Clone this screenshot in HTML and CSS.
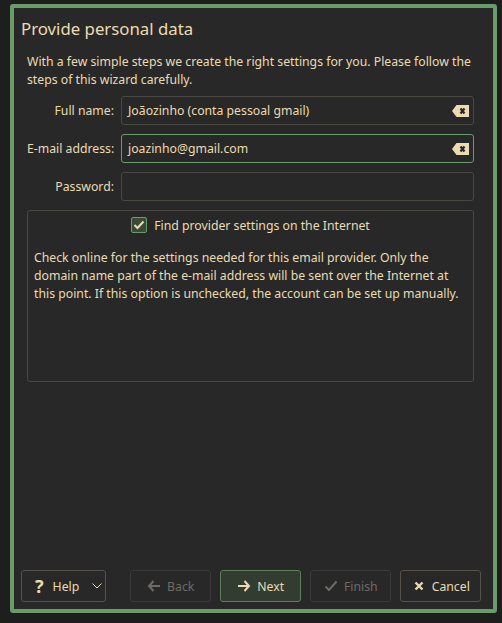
FILE: index.html
```html
<!DOCTYPE html>
<html>
<head>
<meta charset="utf-8">
<link rel="stylesheet" href="styles.css">
</head>
<body>
<div class="window">
  <h1 class="title">Provide personal data</h1>
  <div class="content">
    <p class="intro">With a few simple steps we create the right settings for you. Please follow the steps of this wizard carefully.</p>
    <div class="form">
      <label class="label">Full name:</label>
      <div class="input"><span class="value">Joãozinho (conta pessoal gmail)</span>
        <svg class="clear" width="17" height="12" viewBox="0 0 17 12"><path d="M4.5 0H17V12H4.5L0 6Z" fill="#ebdbb2"/><path d="M8.5 3.5L12.5 8.5M12.5 3.5L8.5 8.5" stroke="#282828" stroke-width="2.2"/></svg>
      </div>
      <label class="label">E-mail address:</label>
      <div class="input focus"><span class="value">joazinho@gmail.com</span>
        <svg class="clear" width="17" height="12" viewBox="0 0 17 12"><path d="M4.5 0H17V12H4.5L0 6Z" fill="#ebdbb2"/><path d="M8.5 3.5L12.5 8.5M12.5 3.5L8.5 8.5" stroke="#282828" stroke-width="2.2"/></svg>
      </div>
      <label class="label">Password:</label>
      <div class="input"></div>
    </div>
    <div class="group">
      <div class="check-row">
        <span class="checkbox"><svg width="12" height="10" viewBox="0 0 12 10"><path d="M1.5 5L4.5 8L10.5 1.5" fill="none" stroke="#ebdbb2" stroke-width="2"/></svg></span>
        <span>Find provider settings on the Internet</span>
      </div>
      <p class="note">Check online for the settings needed for this email provider. Only the domain name part of the e-mail address will be sent over the Internet at this point. If this option is unchecked, the account can be set up manually.</p>
    </div>
  </div>
  <div class="spacer"></div>
  <div class="buttons">
    <button class="btn help"><span class="q">?</span><span>Help</span><svg class="chev" width="10" height="6" viewBox="0 0 10 6"><path d="M0.5 0.5L5 5L9.5 0.5" fill="none" stroke="#ebdbb2" stroke-width="1"/></svg></button>
    <div class="gap"></div>
    <button class="btn disabled"><svg width="16" height="16" viewBox="0 0 16 16"><path d="M14 8H3M7.5 3L3 8L7.5 13" fill="none" stroke="#6e6b66" stroke-width="2"/></svg><span>Back</span></button>
    <button class="btn primary"><svg width="16" height="16" viewBox="0 0 16 16"><path d="M2 8H13M8.5 3L13 8L8.5 13" fill="none" stroke="#ebdbb2" stroke-width="2"/></svg><span>Next</span></button>
    <button class="btn disabled"><svg width="16" height="16" viewBox="0 0 16 16"><path d="M2.5 8.5L6 12L13.5 3.5" fill="none" stroke="#6e6b66" stroke-width="2"/></svg><span>Finish</span></button>
    <button class="btn cancel"><svg width="16" height="16" viewBox="0 0 16 16"><path d="M4.5 4.5L11.5 11.5M11.5 4.5L4.5 11.5" stroke="#ebdbb2" stroke-width="2.4"/></svg><span>Cancel</span></button>
  </div>
</div>
</body>
</html>
```
FILE: styles.css
```css
* { box-sizing: border-box; }
html, body { margin: 0; padding: 0; }
body {
  background: #1e1e1e;
  font-family: "Noto Sans", "Open Sans", sans-serif;
  font-size: 12.25px;
  color: #ebdbb2;
  width: 502px;
  height: 623px;
  overflow: hidden;
}
.window {
  margin: 4px 0 0 10px;
  width: 487px;
  height: 609px;
  background: #282828;
  border: 4px solid #689d6a;
  border-radius: 3px;
  display: flex;
  flex-direction: column;
  padding: 8px 12px 7px 7px;
}
.title {
  margin: 0;
  font-size: 16.8px;
  font-weight: normal;
  line-height: 26px;
}
.content {
  margin: 0 7px 0 6px;
}
.intro {
  margin: 11px 0 0 0;
  line-height: 18px;
}
.form {
  margin-top: 7px;
  display: grid;
  grid-template-columns: 87px 1fr;
  column-gap: 7px;
  row-gap: 9px;
  align-items: center;
}
.label {
  text-align: right;
  white-space: nowrap;
}
.input {
  height: 29px;
  border: 1px solid #4b4741;
  border-radius: 3px;
  display: flex;
  align-items: center;
  padding: 0 4px 0 6px;
}
.input.focus { border-color: #689d6a; }
.value { flex: 1; }
.clear { display: block; }
.group {
  margin-top: 9px;
  height: 172px;
  border: 1px solid #4b4741;
  border-radius: 3px;
  padding: 5px 6px 0 6px;
}
.check-row {
  display: flex;
  align-items: center;
  justify-content: center;
  gap: 7px;
  height: 18px;
}
.checkbox {
  width: 16px;
  height: 16px;
  border: 1px solid #689d6a;
  background: #3a4a37;
  border-radius: 2px;
  display: flex;
  align-items: center;
  justify-content: center;
}
.note {
  margin: 15px 0 0 0;
  line-height: 18px;
}
.spacer { flex: 1; }
.buttons {
  display: flex;
  gap: 8.5px;
  height: 32px;
}
.gap { flex: 1; }
.btn {
  width: 81.5px;
  height: 32px;
  background: #282828;
  border: 1px solid #57524b;
  border-radius: 3px;
  color: #ebdbb2;
  font-family: inherit;
  font-size: 12.25px;
  display: flex;
  align-items: center;
  justify-content: center;
  gap: 5px;
  padding: 0;
}
.btn svg { display: block; }
.btn.help { width: 85px; justify-content: flex-start; padding-left: 13px; gap: 9px; }
.btn.help .q { font-size: 18px; font-weight: bold; line-height: 1; }
.btn.help .chev { margin-left: 4px; }
.btn.primary { background: #323c30; border-color: #5d7f59; }
.btn.disabled { color: #6e6b66; border-color: #3a3a3a; }
.btn.cancel { gap: 5px; }
```
